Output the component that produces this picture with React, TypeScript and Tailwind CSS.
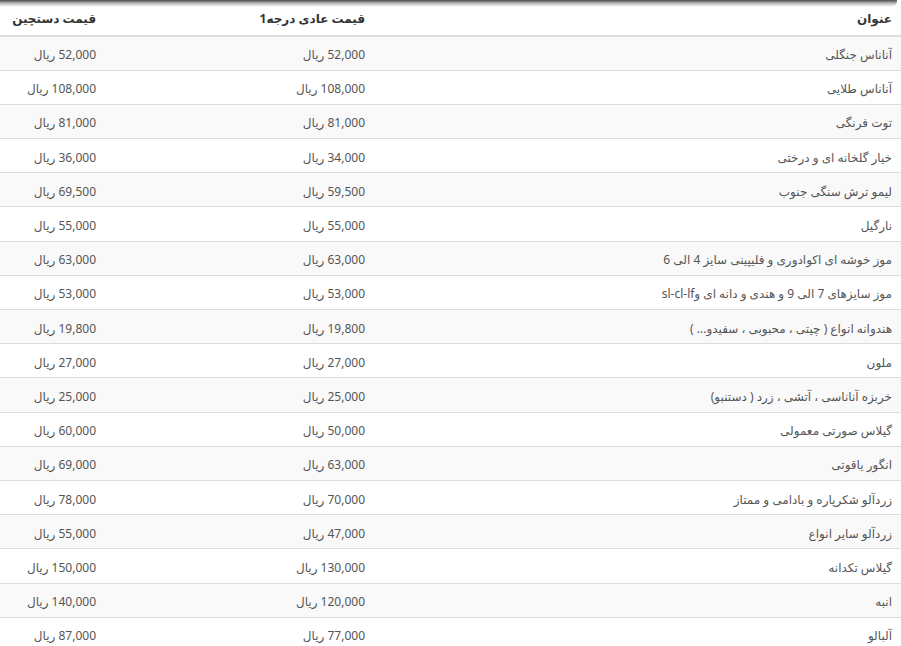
const rows: [string, string, string][] = [
  ['آناناس جنگلی', '52,000', '52,000'],
  ['آناناس طلایی', '108,000', '108,000'],
  ['توت فرنگی', '81,000', '81,000'],
  ['خیار گلخانه ای و درختی', '34,000', '36,000'],
  ['لیمو ترش سنگی جنوب', '59,500', '69,500'],
  ['نارگیل', '55,000', '55,000'],
  ['موز خوشه ای اکوادوری و فلیپینی سایز 4 الی 6', '63,000', '63,000'],
  ['موز سایزهای 7 الی 9 و هندی و دانه ای وsl-cl-lf', '53,000', '53,000'],
  ['هندوانه انواع ( چیتی ، محبوبی ، سفیدو... )', '19,800', '19,800'],
  ['ملون', '27,000', '27,000'],
  ['خربزه آناناسی ، آتشی ، زرد ( دستنبو)', '25,000', '25,000'],
  ['گیلاس صورتی معمولی', '50,000', '60,000'],
  ['انگور یاقوتی', '63,000', '69,000'],
  ['زردآلو شکرپاره و بادامی و ممتاز', '70,000', '78,000'],
  ['زردآلو سایر انواع', '47,000', '55,000'],
  ['گیلاس تکدانه', '130,000', '150,000'],
  ['انبه', '120,000', '140,000'],
  ['آلبالو', '77,000', '87,000'],
];

export default function App() {
  return (
    <div
      dir="rtl"
      className="relative h-[646px] w-[901px] overflow-hidden bg-white text-[12px] text-[#555]"
      style={{ fontFamily: '"Noto Sans", "DejaVu Sans", sans-serif' }}
    >
      {/* shadow from the bar above */}
      <div className="pointer-events-none absolute left-0 right-[4px] top-0 h-[7px] rounded-br-[6px] bg-gradient-to-b from-[rgba(0,0,0,0.7)] via-[rgba(0,0,0,0.25)] to-transparent" />
      <table className="w-full border-collapse">
        <thead>
          <tr className="h-[36px] border-b-2 border-[#ddd]">
            <th className="w-[527px] px-[9px] pt-[3px] text-right font-bold text-[#333]">عنوان</th>
            <th className="w-[269px] px-[9px] pt-[3px] text-right font-bold text-[#333]">قیمت عادی درجه1</th>
            <th className="px-[9px] pt-[3px] text-right font-bold text-[#333]">قیمت دستچین</th>
          </tr>
        </thead>
        <tbody>
          {rows.map(([title, normal, picked], i) => (
            <tr key={i} className={`h-[34.2px] border-b border-[#ddd] ${i % 2 === 0 ? 'bg-[#f9f9f9]' : 'bg-white'}`}>
              <td className="px-[9px] pt-[4px] text-right">{title}</td>
              <td className="px-[9px] pt-[4px] text-right">{normal} ریال</td>
              <td className="px-[9px] pt-[4px] text-right">{picked} ریال</td>
            </tr>
          ))}
        </tbody>
      </table>
    </div>
  );
}
